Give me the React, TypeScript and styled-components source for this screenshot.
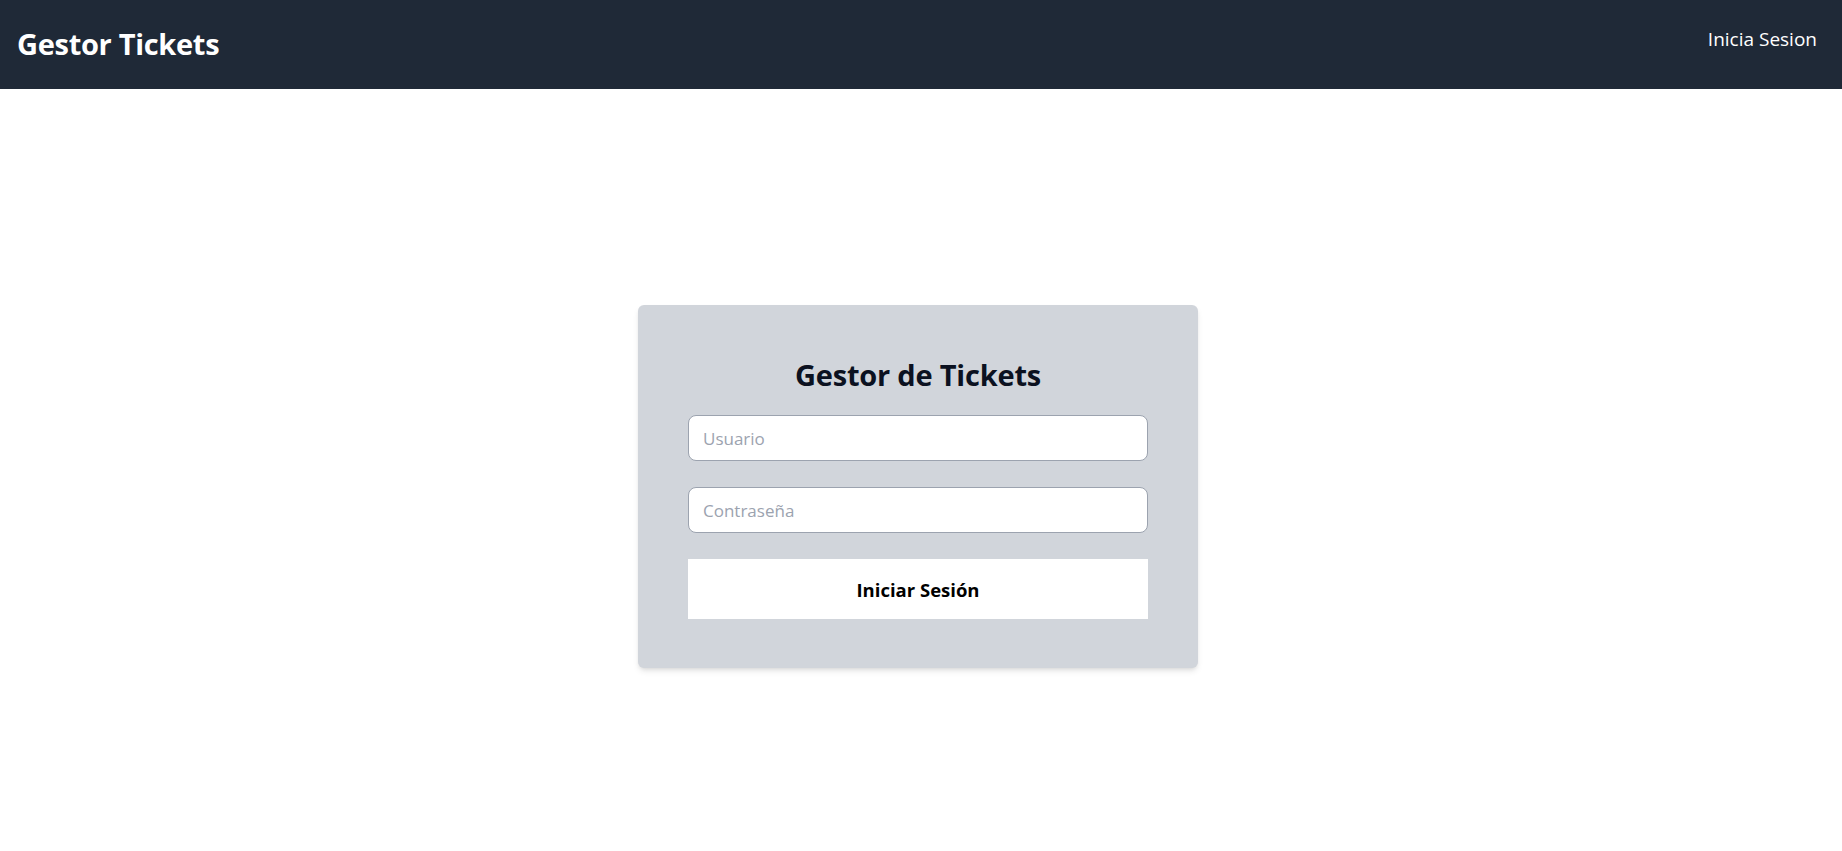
import React from 'react';
import styled, { createGlobalStyle } from 'styled-components';

const GlobalStyle = createGlobalStyle`
  * {
    box-sizing: border-box;
  }

  body {
    margin: 0;
    background: #ffffff;
    font-family: "Open Sans", "Noto Sans", sans-serif;
  }
`;

export default function App(): JSX.Element {
  return (
    <>
      <GlobalStyle />
      <Page>
        <NavBar>
          <Brand>Gestor Tickets</Brand>
          <NavLink href="#">Inicia Sesion</NavLink>
        </NavBar>

        <Main>
          <LoginCard onSubmit={(e) => e.preventDefault()}>
            <Title>Gestor de Tickets</Title>
            <Field type="text" placeholder="Usuario" />
            <Field type="password" placeholder="Contraseña" />
            <SubmitButton type="submit">Iniciar Sesión</SubmitButton>
          </LoginCard>
        </Main>
      </Page>
    </>
  );
}

const Page = styled.div`
  min-height: 100vh;
  display: flex;
  flex-direction: column;
`;

const NavBar = styled.header`
  height: 89px;
  background: #1f2937;
  display: flex;
  align-items: flex-start;
  justify-content: space-between;
  padding: 0 25px 0 17px;
`;

const Brand = styled.h1`
  margin: 0;
  padding-top: 24px;
  font-size: 29px;
  line-height: 40px;
  font-weight: 700;
  color: #ffffff;
  letter-spacing: -0.3px;
`;

const NavLink = styled.a`
  padding-top: 25px;
  font-size: 19px;
  line-height: 28px;
  color: #ffffff;
  text-decoration: none;
`;

const Main = styled.main`
  flex: 1;
  display: flex;
  justify-content: center;
  padding: 216px 6px 0 0;
`;

const LoginCard = styled.form`
  width: 560px;
  height: 363px;
  padding: 50px 50px 49px;
  background: #d1d5db;
  border-radius: 6px;
  box-shadow: 0 4px 6px -1px rgba(0, 0, 0, 0.1), 0 2px 4px -2px rgba(0, 0, 0, 0.1);
  display: flex;
  flex-direction: column;
`;

const Title = styled.h2`
  margin: 0 0 20px;
  text-align: center;
  font-size: 29px;
  line-height: 40px;
  font-weight: 700;
  color: #0b1120;
  letter-spacing: -0.2px;
`;

const Field = styled.input`
  height: 46px;
  margin-bottom: 26px;
  padding: 0 14px;
  border: 1px solid #9ca3af;
  border-radius: 8px;
  background: #ffffff;
  font-family: inherit;
  font-size: 17px;
  color: #111827;
  outline: none;

  &::placeholder {
    color: #9ca3af;
  }
`;

const SubmitButton = styled.button`
  height: 60px;
  border: none;
  background: #ffffff;
  font-family: inherit;
  font-size: 18.5px;
  font-weight: 700;
  color: #000000;
  cursor: pointer;
`;
